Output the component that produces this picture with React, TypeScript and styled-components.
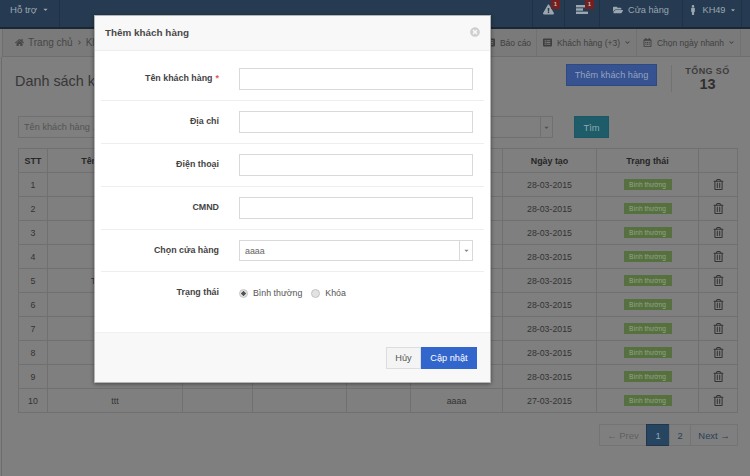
import React from "react";
import styled, { createGlobalStyle } from "styled-components";
import {
  FaCaretDown, FaExclamationTriangle, FaFolderOpen, FaMale, FaHome, FaChevronRight,
  FaListAlt, FaRegCalendarAlt, FaChevronDown, FaRegTrashAlt, FaTimesCircle,
} from "react-icons/fa";

const Global = createGlobalStyle`
  html, body { margin: 0; padding: 0; background: #7f7f7f; }
  * { box-sizing: border-box; }
  body { font-family: "Liberation Sans", Arial, sans-serif; }
`;

const Page = styled.div`
  position: relative; width: 750px; height: 476px; overflow: hidden;
  background: #7f7f7f; color: #333;
`;
const Navbar = styled.header`
  height: 29px; display: flex; justify-content: space-between;
  background: #263b51; border-bottom: 2px solid #1a2833; color: #9aa6b0;
`;
const NavCell = styled.div<{ $w: number }>`
  width: ${p => p.$w}px; display: flex; align-items: center; justify-content: center; gap: 5px;
  position: relative; border-right: 1px solid #1f3244; font-size: 9.2px; padding-bottom: 8px;
`;
const NavRight = styled.div`
  display: flex; padding-right: 8px;
  & > ${NavCell}:first-child { border-left: 1px solid #1f3244; }
`;
const Badge = styled.span<{ $r: number }>`
  position: absolute; top: 0; right: ${p => p.$r}px; width: 9px; height: 9px; background: #742020;
  color: #c8b8b8; font-size: 6px; font-weight: bold; text-align: center; line-height: 9px;
`;
const SupportText = styled.span`font-size: 9.6px;`;
const Crumbs = styled.nav`
  height: 28px; display: flex; justify-content: space-between; align-items: stretch;
  margin-left: 2px; background: #7a7a7a; border-left: 1px solid #6f6f6f; border-bottom: 1px solid #6e6e6e;
  color: #4a4a4a;
`;
const CrumbLeft = styled.div`
  display: flex; align-items: center; gap: 4px; padding-left: 12px; font-size: 10px; color: #474747;
`;
const CrumbRight = styled.div`display: flex; padding-right: 9px;`;
const CrumbCell = styled.div<{ $w: number }>`
  width: ${p => p.$w}px; display: flex; align-items: center; justify-content: center; gap: 5px;
  border-right: 1px solid #717171; font-size: 8.5px; color: #3f3f3f;
`;
const Main = styled.main`
  margin-left: 1px; height: 419px; border-left: 1px solid #6c6c6c; padding: 0 12px 0 16px;
`;
const TitleRow = styled.div`
  height: 59px; display: flex; align-items: flex-start; padding-top: 7px; margin-left: -3px;
`;
const Title = styled.h1`
  flex: 1; margin: 9px 0 0; font-size: 14.4px; font-weight: normal; color: #363636; white-space: nowrap;
`;
const AddButton = styled.button`
  width: 91px; height: 22px; border: 1px solid #30497f; background: #375290; color: #94a4be;
  font: 9.2px "Liberation Sans", Arial, sans-serif; padding: 0;
`;
const Stat = styled.div`
  width: 72px; margin: 1px -5px 0 14px; height: 27px; border-left: 1px solid #727272; text-align: center;
  color: #3c3c3c; font-weight: bold; font-size: 9px; letter-spacing: .4px; line-height: 11px; padding-top: 1px;
`;
const StatValue = styled.div`font-size: 14.5px; line-height: 15px; letter-spacing: 0; color: #2f2f2f;`;
const Filters = styled.div`
  display: flex; height: 22px; margin-bottom: 10px;
`;
const FilterInput = styled.div`
  width: 150px; border: 1px solid #707070; background: #7f7f7f; color: #535353;
  font-size: 9.2px; line-height: 20px; padding-left: 5px;
`;
const FilterSelect = styled.div`
  width: 365px; margin-left: 20px; border: 1px solid #707070; display: flex; justify-content: flex-end;
`;
const FilterArrow = styled.div`
  width: 12px; border-left: 1px solid #707070; display: flex; align-items: center; justify-content: center;
  color: #505050; font-size: 7px;
`;
const SearchButton = styled.button`
  width: 35px; margin-left: 21px; border: 1px solid #1b5863; background: #1d5c68; color: #90aab0;
  font: 9.4px "Liberation Sans", Arial, sans-serif; padding: 0;
`;
const Table = styled.table`
  width: 719px; table-layout: fixed; border-collapse: collapse; font-size: 8.8px; margin-left: 0;
  th, td { border: 1px solid #707070; text-align: center; padding: 0; height: 24px; }
  th { font-weight: bold; color: #262626; font-size: 8.9px; }
  td { color: #333; }
`;
const StatusLabel = styled.span`
  display: inline-block; width: 48px; height: 11px; line-height: 11px; background: #567040; color: #94a686;
  font-size: 6.6px; vertical-align: middle;
`;
const TrashIcon = styled(FaRegTrashAlt)`color: #333; font-size: 11px; vertical-align: middle;`;
const Pager = styled.div`
  display: flex; justify-content: flex-end; margin-top: 11px; font-size: 9.4px;
`;
const PageItem = styled.div<{ $w: number; $active?: boolean; $muted?: boolean }>`
  width: ${p => p.$w}px; height: 22px; display: flex; align-items: center; justify-content: center;
  border: 1px solid ${p => (p.$active ? "#22354a" : "#747474")};
  margin-left: -1px;
  background: ${p => (p.$active ? "#264560" : "transparent")};
  color: ${p => (p.$active ? "#96a6b4" : p.$muted ? "#5f5f5f" : "#2a4058")};
`;
const Modal = styled.section`
  position: absolute; left: 94px; top: 15px; width: 397px; height: 368px; background: #fff;
  border: 1px solid #b5b5b5; box-shadow: 0 1px 4px rgba(0,0,0,.45);
  display: flex; flex-direction: column;
`;
const ModalHeader = styled.div`
  height: 35px; flex: none; background: #f8f8f8; border-bottom: 1px solid #eee; display: flex;
  align-items: center; justify-content: space-between; padding: 0 10px 2px 10px;
`;
const ModalTitle = styled.h2`
  margin: 0; font-size: 9.9px; font-weight: bold; color: #484848;
`;
const CloseIcon = styled(FaTimesCircle)`color: #cfcfcf; font-size: 10px;`;
const ModalBody = styled.div`flex: 1; padding: 7px 6px 0;`;
const FormRow = styled.div<{ $last?: boolean }>`
  display: grid; grid-template-columns: 118px 234px; column-gap: 20px; align-items: center;
  padding: ${p => (p.$last ? "15px" : "10px")} 0 10px; border-bottom: ${p => (p.$last ? "none" : "1px solid #eee")};
`;
const Label = styled.label`
  text-align: right; font-size: 8.9px; font-weight: bold; color: #444; padding-bottom: 2px;
`;
const Required = styled.span`color: #e25555; margin-left: 3px;`;
const TextInput = styled.input`
  width: 234px; height: 22px; border: 1px solid #d9d9d9; background: #fff; padding: 0 5px; outline: none;
`;
const Select = styled.div`
  width: 234px; height: 21px; border: 1px solid #d9d9d9; display: flex; align-items: center; justify-content: space-between;
  font-size: 8.9px; color: #666; padding-left: 5px;
`;
const SelectArrow = styled.div`
  width: 13px; height: 100%; border-left: 1px solid #d9d9d9; display: flex; align-items: center; justify-content: center;
  color: #888; font-size: 7px;
`;
const RadioGroup = styled.div`display: flex; align-items: center; font-size: 8.8px; color: #555; gap: 5px;`;
const Radio = styled.span<{ $on?: boolean }>`
  width: 9px; height: 9px; border-radius: 50%; border: 1px solid #c4c4c4;
  background: ${p => (p.$on ? "radial-gradient(circle, #555 0 2px, #e4e4e4 2.3px)" : "#e2e2e2")};
`;
const RadioText = styled.span`margin-right: 4px;`;
const ModalFooter = styled.div`
  height: 50px; flex: none; background: #f8f8f8; border-top: 1px solid #f0f0f0; display: flex;
  justify-content: flex-end; padding: 14px 13px 0 0;
`;
const CancelButton = styled.button`
  width: 35px; height: 22px; border: 1px solid #ddd; background: #f4f4f4; color: #555; padding: 0;
  font: 9.2px "Liberation Sans", Arial, sans-serif;
`;
const SaveButton = styled.button`
  width: 56px; height: 22px; border: 1px solid #3366cc; background: #3366cc; color: #fff; padding: 0;
  font: 9.2px "Liberation Sans", Arial, sans-serif;
`;

const BarsIcon = () => (
  <svg width="12" height="9" viewBox="0 0 12 9" fill="currentColor" aria-hidden="true">
    <rect x="0" y="0" width="12" height="2.4" />
    <rect x="0" y="3.3" width="7" height="2.4" />
    <rect x="0" y="6.6" width="12" height="2.4" />
  </svg>
);

const names = ["", "", "", "", "Trần Văn An", "", "", "", "", "ttt"];

export default function App() {
  return (
    <Page>
      <Global />
      <Navbar>
        <NavCell $w={60}><SupportText>Hỗ trợ</SupportText> <FaCaretDown size={7} /></NavCell>
        <NavRight>
          <NavCell $w={33}><FaExclamationTriangle size={11} /><Badge $r={4}>1</Badge></NavCell>
          <NavCell $w={35}><BarsIcon /><Badge $r={5}>1</Badge></NavCell>
          <NavCell $w={83}><FaFolderOpen size={10} /> Cửa hàng</NavCell>
          <NavCell $w={59}><FaMale size={10} /> KH49<FaCaretDown size={6} /></NavCell>
        </NavRight>
      </Navbar>
      <Crumbs>
        <CrumbLeft><FaHome size={9} /> Trang chủ <FaChevronRight size={5} /> Khách hàng</CrumbLeft>
        <CrumbRight>
          <CrumbCell $w={56}><FaListAlt size={9} /> Báo cáo</CrumbCell>
          <CrumbCell $w={100}><FaListAlt size={9} /> Khách hàng (+3) <FaChevronDown size={5} /></CrumbCell>
          <CrumbCell $w={104}><FaRegCalendarAlt size={9} /> Chọn ngày nhanh <FaChevronDown size={5} /></CrumbCell>
        </CrumbRight>
      </Crumbs>
      <Main>
        <TitleRow>
          <Title>Danh sách khách hàng</Title>
          <AddButton>Thêm khách hàng</AddButton>
          <Stat>TỔNG SỐ<StatValue>13</StatValue></Stat>
        </TitleRow>
        <Filters>
          <FilterInput>Tên khách hàng ...</FilterInput>
          <FilterSelect><FilterArrow><FaCaretDown /></FilterArrow></FilterSelect>
          <SearchButton>Tìm</SearchButton>
        </Filters>
        <Table>
          <colgroup>
            {[29, 135, 70, 94, 64, 92, 94, 102, 39].map((w, i) => <col key={i} style={{ width: w }} />)}
          </colgroup>
          <thead>
            <tr>
              <th>STT</th><th>Tên khách hàng</th><th>Địa chỉ</th><th>Điện thoại</th><th>CMND</th>
              <th>Cửa hàng</th><th>Ngày tạo</th><th>Trạng thái</th><th />
            </tr>
          </thead>
          <tbody>
            {names.map((n, i) => (
              <tr key={i}>
                <td>{i + 1}</td><td>{n}</td><td /><td /><td />
                <td>aaaa</td>
                <td>{i === 9 ? "27-03-2015" : "28-03-2015"}</td>
                <td><StatusLabel>Bình thường</StatusLabel></td>
                <td><TrashIcon /></td>
              </tr>
            ))}
          </tbody>
        </Table>
        <Pager>
          <PageItem $w={48} $muted>← Prev</PageItem>
          <PageItem $w={24} $active>1</PageItem>
          <PageItem $w={22}>2</PageItem>
          <PageItem $w={48}>Next →</PageItem>
        </Pager>
      </Main>
      <Modal>
        <ModalHeader>
          <ModalTitle>Thêm khách hàng</ModalTitle>
          <CloseIcon />
        </ModalHeader>
        <ModalBody>
          <FormRow><Label>Tên khách hàng<Required>*</Required></Label><TextInput /></FormRow>
          <FormRow><Label>Địa chỉ</Label><TextInput /></FormRow>
          <FormRow><Label>Điện thoại</Label><TextInput /></FormRow>
          <FormRow><Label>CMND</Label><TextInput /></FormRow>
          <FormRow><Label>Chọn cửa hàng</Label><Select>aaaa<SelectArrow><FaCaretDown /></SelectArrow></Select></FormRow>
          <FormRow $last>
            <Label>Trạng thái</Label>
            <RadioGroup><Radio $on /><RadioText>Bình thường</RadioText><Radio /><RadioText>Khóa</RadioText></RadioGroup>
          </FormRow>
        </ModalBody>
        <ModalFooter>
          <CancelButton>Hủy</CancelButton>
          <SaveButton>Cập nhật</SaveButton>
        </ModalFooter>
      </Modal>
    </Page>
  );
}
